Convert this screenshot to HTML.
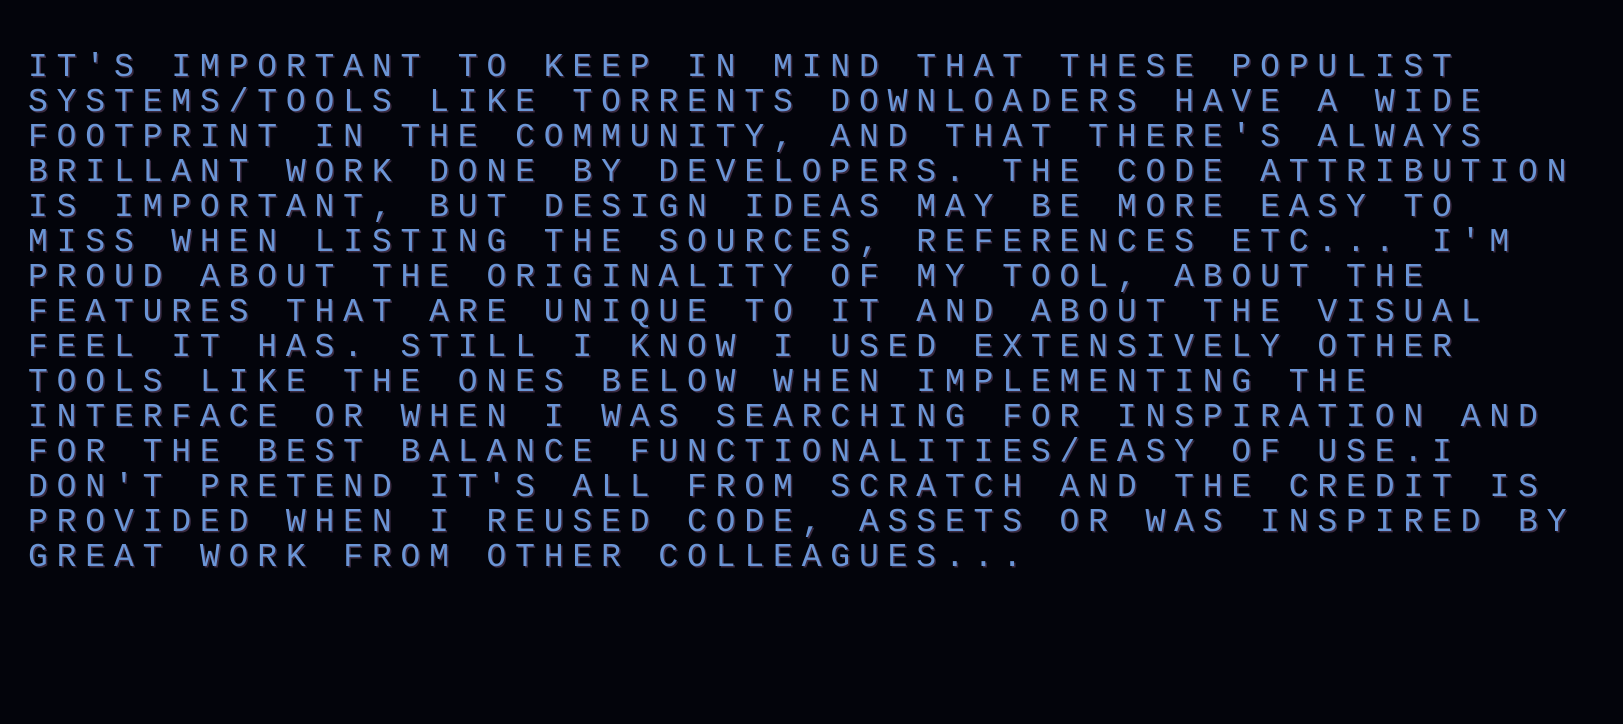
<!DOCTYPE html>
<html><head><style>
html,body{margin:0;padding:0;background:#03040b;width:1623px;height:724px;overflow:hidden}
.t{position:absolute;left:28px;top:50px;font-family:"Liberation Mono",monospace;font-size:33px;line-height:35px;letter-spacing:8.85px;color:#6b95d6;text-shadow:1.5px 1.5px 0 #3a2a40;white-space:pre;text-transform:uppercase}
</style></head><body>
<div class="t">IT'S IMPORTANT TO KEEP IN MIND THAT THESE POPULIST
SYSTEMS/TOOLS LIKE TORRENTS DOWNLOADERS HAVE A WIDE
FOOTPRINT IN THE COMMUNITY, AND THAT THERE'S ALWAYS
BRILLANT WORK DONE BY DEVELOPERS. THE CODE ATTRIBUTION
IS IMPORTANT, BUT DESIGN IDEAS MAY BE MORE EASY TO
MISS WHEN LISTING THE SOURCES, REFERENCES ETC... I'M
PROUD ABOUT THE ORIGINALITY OF MY TOOL, ABOUT THE
FEATURES THAT ARE UNIQUE TO IT AND ABOUT THE VISUAL
FEEL IT HAS. STILL I KNOW I USED EXTENSIVELY OTHER
TOOLS LIKE THE ONES BELOW WHEN IMPLEMENTING THE
INTERFACE OR WHEN I WAS SEARCHING FOR INSPIRATION AND
FOR THE BEST BALANCE FUNCTIONALITIES/EASY OF USE.I
DON'T PRETEND IT'S ALL FROM SCRATCH AND THE CREDIT IS
PROVIDED WHEN I REUSED CODE, ASSETS OR WAS INSPIRED BY
GREAT WORK FROM OTHER COLLEAGUES...</div>
</body></html>
